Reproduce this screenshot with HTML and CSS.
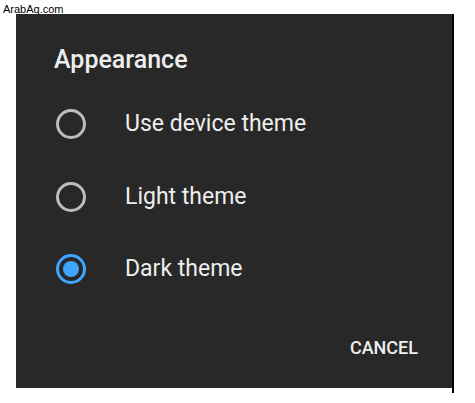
FILE: index.html
```html
<!DOCTYPE html>
<html lang="en">
<head>
<meta charset="UTF-8">
<meta name="viewport" content="width=device-width, initial-scale=1.0">
<title>Appearance</title>
<link rel="stylesheet" href="styles.css">
</head>
<body>
<span class="watermark">ArabAq.com</span>
<div class="frame">
    <div class="dialog">
        <h1 class="title">Appearance</h1>
        <div class="options">
            <label class="option">
                <svg class="radio" viewBox="0 0 30 30" width="30" height="30">
                    <circle cx="15" cy="15" r="13.5" fill="none" stroke="#bdbdbd" stroke-width="3"/>
                </svg>
                <span>Use device theme</span>
            </label>
            <label class="option">
                <svg class="radio" viewBox="0 0 30 30" width="30" height="30">
                    <circle cx="15" cy="15" r="13.5" fill="none" stroke="#bdbdbd" stroke-width="3"/>
                </svg>
                <span>Light theme</span>
            </label>
            <label class="option">
                <svg class="radio" viewBox="0 0 30 30" width="30" height="30">
                    <circle cx="15" cy="15" r="13.5" fill="none" stroke="#3ea6ff" stroke-width="3"/>
                    <circle cx="15" cy="15" r="8" fill="#3ea6ff"/>
                </svg>
                <span>Dark theme</span>
            </label>
        </div>
        <div class="actions">
            <button class="cancel">Cancel</button>
        </div>
    </div>
    <div class="edge"></div>
</div>
</body>
</html>
```

FILE: styles.css
```css
body, html {
    margin: 0;
    padding: 0;
}
body {
    background-color: #fff;
    font-family: Roboto, "Liberation Sans", sans-serif;
}
.watermark {
    position: absolute;
    left: 3px;
    top: 3px;
    font-family: "Liberation Sans", Arial, sans-serif;
    font-size: 11px;
    line-height: 12px;
    color: #000;
    z-index: 1;
}
.frame {
    display: flex;
    padding: 14px 0 0 16px;
}
.dialog {
    width: 436px;
    height: 374px;
    box-sizing: border-box;
    padding-top: 32px;
    background-color: #282828;
    color: #eeeeee;
}
.edge {
    width: 2px;
    height: 379px;
    background-color: #000;
}
.title {
    margin: 0 0 14px 38px;
    font-size: 25px;
    line-height: 28px;
    font-weight: 500;
}
.option {
    display: flex;
    align-items: center;
    gap: 39px;
    height: 72.5px;
    padding-left: 40px;
    font-size: 23px;
    line-height: 28px;
}
.radio {
    display: block;
    flex: none;
}
.actions {
    display: flex;
    justify-content: flex-end;
    padding: 31px 34px 0 0;
}
.cancel {
    padding: 0;
    background: none;
    border: none;
    color: #eeeeee;
    font-family: Roboto, "Liberation Sans", sans-serif;
    font-size: 18px;
    line-height: 22px;
    font-weight: 500;
    text-transform: uppercase;
    cursor: pointer;
}
```
